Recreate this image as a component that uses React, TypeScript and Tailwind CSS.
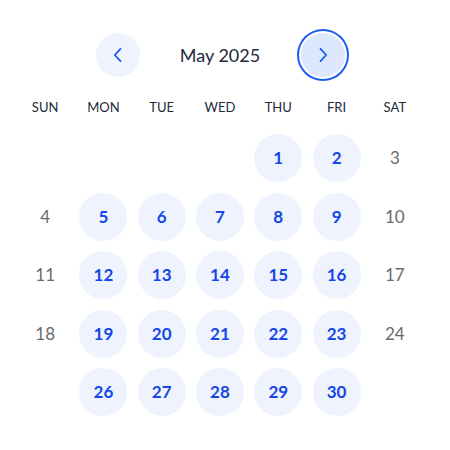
const days = ['SUN', 'MON', 'TUE', 'WED', 'THU', 'FRI', 'SAT'];

type Cell = { day: number; available: boolean } | null;

function buildMonth(): Cell[] {
  // May 2025 starts on a Thursday; last row shows only weekdays
  const cells: Cell[] = [null, null, null, null];
  for (let d = 1; d <= 31; d++) {
    const weekday = (d + 3) % 7;
    const weekend = weekday === 0 || weekday === 6;
    if (d === 25 || d === 31) {
      cells.push(null);
      continue;
    }
    cells.push({ day: d, available: !weekend });
  }
  return cells;
}

function Chevron({ dir }: { dir: 'left' | 'right' }) {
  return (
    <svg width="16" height="16" viewBox="0 0 16 16" fill="none">
      <path
        d={dir === 'left' ? 'M10.5 1.8 4.8 8l5.7 6.2' : 'M5.5 1.8 11.2 8l-5.7 6.2'}
        stroke="#1d5cf0"
        strokeWidth="1.8"
        strokeLinecap="round"
        strokeLinejoin="round"
      />
    </svg>
  );
}

export default function App() {
  const cells = buildMonth();

  return (
    <div className="min-h-screen w-[450px] bg-white font-['Lato',sans-serif]">
      <div className="ml-[16px] w-[408px] pt-[33px]">
        <div className="flex items-center justify-center">
          <button className="flex h-[44px] w-[44px] items-center justify-center rounded-full bg-[#eef3fe]">
            <Chevron dir="left" />
          </button>
          <div className="w-[161px] text-center text-[18px] text-[#1e293b]">May 2025</div>
          <button className="flex h-[44px] w-[44px] items-center justify-center rounded-full bg-[#dde8fe] ring-2 ring-[#1d5cf0] ring-offset-2">
            <Chevron dir="right" />
          </button>
        </div>

        <div className="mt-[22px] grid grid-cols-7">
          {days.map((d) => (
            <div key={d} className="text-center text-[13px] leading-4 text-[#1e293b]">
              {d}
            </div>
          ))}
        </div>

        <div className="mt-[19px] grid grid-cols-7 gap-y-[10.5px]">
          {cells.slice(0, 35).map((c, i) => (
            <div key={i} className="flex h-12 items-center justify-center">
              {c &&
                (c.available ? (
                  <button className="flex h-12 w-12 items-center justify-center rounded-full bg-[#eef3fe] text-[17px] font-bold text-[#1447e6]">
                    {c.day}
                  </button>
                ) : (
                  <span className="text-[17px] text-[#6b6b6b]">{c.day}</span>
                ))}
            </div>
          ))}
        </div>
      </div>
    </div>
  );
}
